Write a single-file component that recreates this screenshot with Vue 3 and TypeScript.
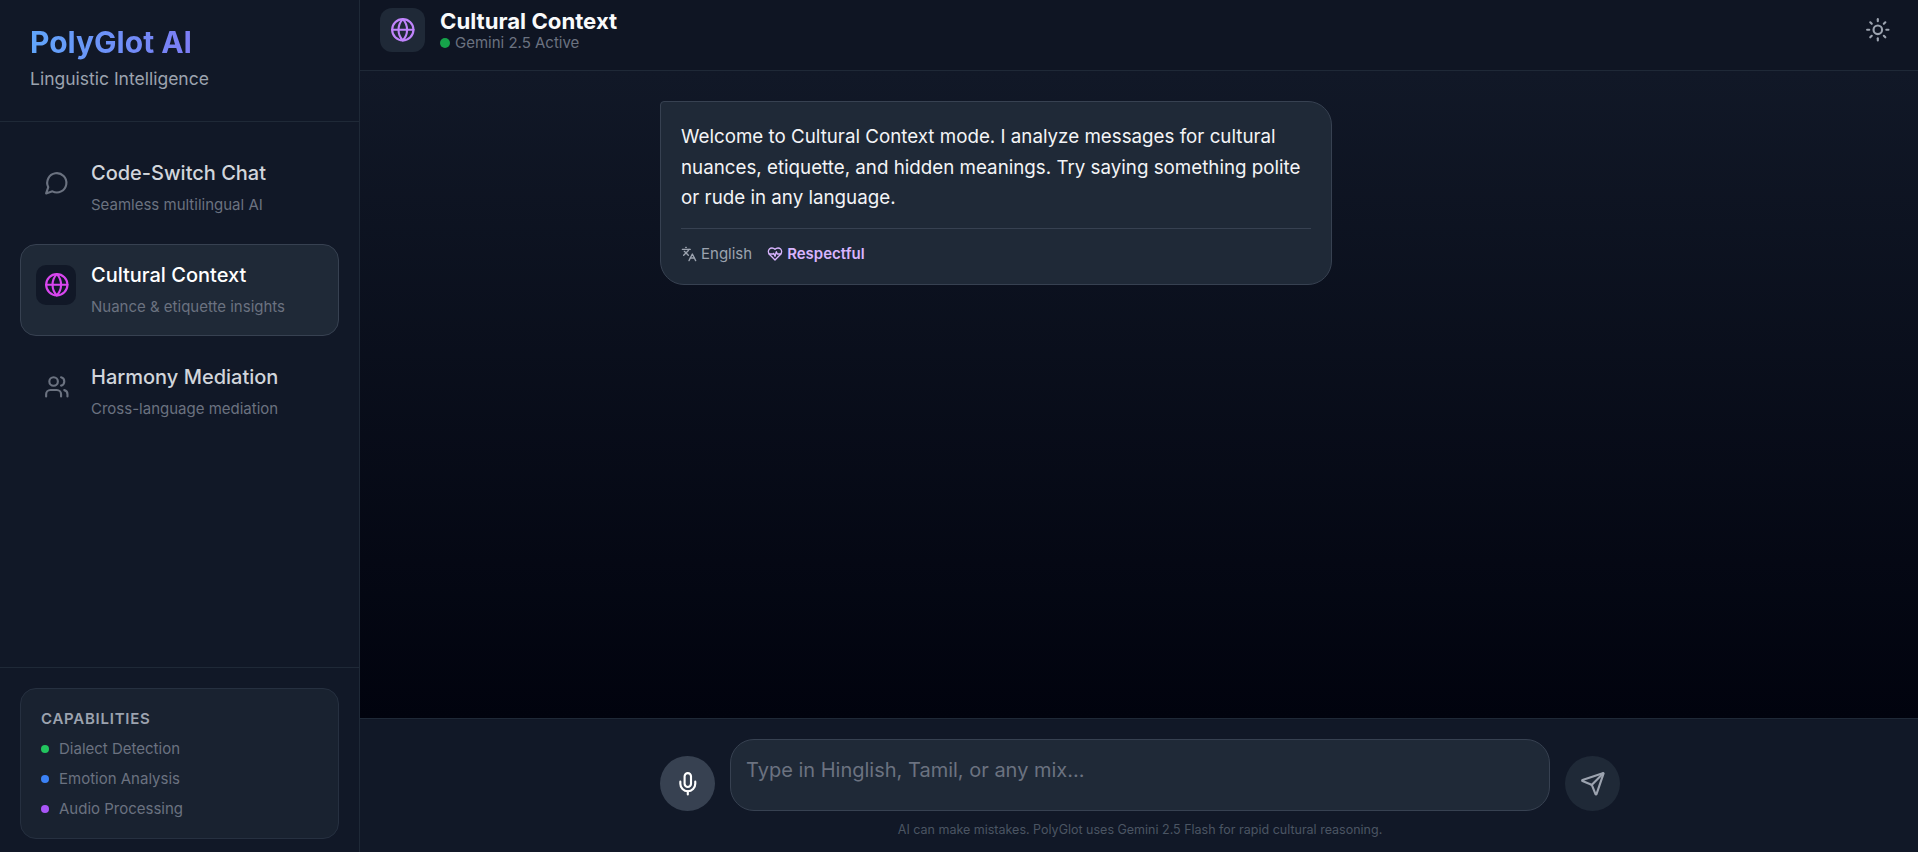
<script setup lang="ts">
import { ref } from 'vue';

// nav entries, active one is highlighted
const modes = [
  { id: 'chat', title: 'Code-Switch Chat', sub: 'Seamless multilingual AI' },
  { id: 'culture', title: 'Cultural Context', sub: 'Nuance & etiquette insights' },
  { id: 'harmony', title: 'Harmony Mediation', sub: 'Cross-language mediation' }
];
const current = ref('culture');
const draft = ref('');

const capabilities = [
  { label: 'Dialect Detection', color: '#22c55e' },
  { label: 'Emotion Analysis', color: '#3b82f6' },
  { label: 'Audio Processing', color: '#a855f7' }
];
</script>

<template>
  <div class="shell">
    <aside class="sidebar">
      <div class="brand">
        <h1>PolyGlot AI</h1>
        <p>Linguistic Intelligence</p>
      </div>

      <nav class="modes">
        <button
          v-for="m in modes"
          :key="m.id"
          class="mode"
          :class="{ active: current === m.id }"
          @click="current = m.id"
        >
          <span class="mode-icon">
            <svg v-if="m.id === 'chat'" viewBox="0 0 24 24"><path d="M7.9 20A9 9 0 1 0 4 16.1L2 22Z" /></svg>
            <svg v-else-if="m.id === 'culture'" viewBox="0 0 24 24">
              <circle cx="12" cy="12" r="10" />
              <path d="M12 2a14.5 14.5 0 0 0 0 20 14.5 14.5 0 0 0 0-20" />
              <path d="M2 12h20" />
            </svg>
            <svg v-else viewBox="0 0 24 24">
              <path d="M16 21v-2a4 4 0 0 0-4-4H6a4 4 0 0 0-4 4v2" />
              <circle cx="9" cy="7" r="4" />
              <path d="M22 21v-2a4 4 0 0 0-3-3.87" />
              <path d="M16 3.13a4 4 0 0 1 0 7.75" />
            </svg>
          </span>
          <span class="mode-text">
            <span class="mode-title">{{ m.title }}</span>
            <span class="mode-sub">{{ m.sub }}</span>
          </span>
        </button>
      </nav>

      <div class="side-foot">
        <div class="caps">
          <h3>Capabilities</h3>
          <ul>
            <li v-for="c in capabilities" :key="c.label">
              <i :style="{ background: c.color }"></i>{{ c.label }}
            </li>
          </ul>
        </div>
      </div>
    </aside>

    <main class="main">
      <header class="topbar">
        <div class="top-left">
          <span class="top-icon">
            <svg viewBox="0 0 24 24">
              <circle cx="12" cy="12" r="10" />
              <path d="M12 2a14.5 14.5 0 0 0 0 20 14.5 14.5 0 0 0 0-20" />
              <path d="M2 12h20" />
            </svg>
          </span>
          <div>
            <h2>Cultural Context</h2>
            <div class="status"><i></i>Gemini 2.5 Active</div>
          </div>
        </div>
        <button class="theme" aria-label="Toggle theme">
          <svg viewBox="0 0 24 24">
            <circle cx="12" cy="12" r="4" />
            <path d="M12 2v2" /><path d="M12 20v2" />
            <path d="m4.93 4.93 1.41 1.41" /><path d="m17.66 17.66 1.41 1.41" />
            <path d="M2 12h2" /><path d="M20 12h2" />
            <path d="m6.34 17.66-1.41 1.41" /><path d="m19.07 4.93-1.41 1.41" />
          </svg>
        </button>
      </header>

      <section class="messages">
        <div class="column">
          <article class="bubble">
            <p>Welcome to Cultural Context mode. I analyze messages for cultural nuances, etiquette, and hidden meanings. Try saying something polite or rude in any language.</p>
            <div class="meta">
              <span class="lang">
                <svg viewBox="0 0 24 24">
                  <path d="m5 8 6 6" /><path d="m4 14 6-6 2-3" /><path d="M2 5h12" /><path d="M7 2h1" />
                  <path d="m22 22-5-10-5 10" /><path d="M14 18h6" />
                </svg>
                English
              </span>
              <span class="tone">
                <svg viewBox="0 0 24 24">
                  <path d="M19 14c1.49-1.46 3-3.21 3-5.5A5.5 5.5 0 0 0 16.5 3c-1.76 0-3 .5-4.5 2-1.5-1.5-2.74-2-4.5-2A5.5 5.5 0 0 0 2 8.5c0 2.3 1.5 4.05 3 5.5l7 7Z" />
                  <path d="M3.22 12H9.5l.5-1 2 4.5 2-7 1.5 3.5h5.27" />
                </svg>
                Respectful
              </span>
            </div>
          </article>
        </div>
      </section>

      <footer class="composer">
        <div class="input-row">
          <button class="round mic" aria-label="Record">
            <svg viewBox="0 0 24 24">
              <path d="M12 2a3 3 0 0 0-3 3v7a3 3 0 0 0 6 0V5a3 3 0 0 0-3-3Z" />
              <path d="M19 10v2a7 7 0 0 1-14 0v-2" />
              <path d="M12 19v3" />
            </svg>
          </button>
          <textarea v-model="draft" placeholder="Type in Hinglish, Tamil, or any mix..."></textarea>
          <button class="round send" aria-label="Send">
            <svg viewBox="0 0 24 24">
              <path d="M14.536 21.686a.5.5 0 0 0 .937-.024l6.5-19a.496.496 0 0 0-.635-.635l-19 6.5a.5.5 0 0 0-.024.937l7.93 3.18a2 2 0 0 1 1.112 1.11z" />
              <path d="m21.854 2.147-10.94 10.939" />
            </svg>
          </button>
        </div>
        <p class="note">AI can make mistakes. PolyGlot uses Gemini 2.5 Flash for rapid cultural reasoning.</p>
      </footer>
    </main>
  </div>
</template>

<style scoped>
/* --- Layout --- */
.shell {
  display: flex;
  height: 852px;
  overflow: hidden;
  background: #111827;
  color: #f3f4f6;
  font-family: Inter, "Noto Sans", sans-serif;
}

svg {
  fill: none;
  stroke: currentColor;
  stroke-width: 2;
  stroke-linecap: round;
  stroke-linejoin: round;
  display: block;
}

/* --- Sidebar --- */
.sidebar {
  width: 360px;
  flex-shrink: 0;
  display: flex;
  flex-direction: column;
  background: #111827;
  border-right: 1px solid #1f2937;
  box-sizing: border-box;
}

.brand {
  height: 122px;
  box-sizing: border-box;
  padding: 24px 30px 0;
  border-bottom: 1px solid #1f2937;
}

.brand h1 {
  margin: 0;
  font-size: 30px;
  line-height: 36px;
  font-weight: 700;
  background: linear-gradient(90deg, #60a5fa, #7c7cf5);
  -webkit-background-clip: text;
  background-clip: text;
  color: transparent;
  display: inline-block;
}

.brand p {
  margin: 8px 0 0;
  font-size: 17.5px;
  line-height: 22px;
  color: #9ca3af;
}

.modes {
  flex: 1;
  display: flex;
  flex-direction: column;
  gap: 10px;
  padding: 20px;
}

.mode {
  display: flex;
  align-items: flex-start;
  gap: 15px;
  height: 92px;
  padding: 16px 15px;
  box-sizing: border-box;
  background: transparent;
  border: 1px solid transparent;
  border-radius: 16px;
  font-family: inherit;
  text-align: left;
  color: #d1d5db;
  cursor: pointer;
}

.mode.active {
  background: #1f2937;
  border-color: #374151;
  color: #fff;
}

.mode-icon {
  width: 40px;
  height: 40px;
  box-sizing: border-box;
  padding-left: 1px;
  margin-top: 4px;
  flex-shrink: 0;
  display: flex;
  align-items: center;
  justify-content: center;
  border-radius: 10px;
  color: #6b7280;
}

.mode-icon svg {
  width: 25.6px;
  height: 25.6px;
}

.mode.active .mode-icon {
  background: #111827;
  color: #d946ef;
}

.mode-text {
  display: flex;
  flex-direction: column;
  gap: 8px;
}

.mode-title {
  font-size: 20px;
  line-height: 28px;
  font-weight: 500;
}

.mode-sub {
  font-size: 15px;
  line-height: 20px;
  color: #6b7280;
}

.side-foot {
  padding: 20px 20px 13px;
  border-top: 1px solid #1f2937;
}

.caps {
  height: 151px;
  box-sizing: border-box;
  padding: 20px;
  background: #192230;
  border: 1px solid #263040;
  border-radius: 16px;
}

.caps h3 {
  margin: 0 0 10px;
  font-size: 15px;
  line-height: 20px;
  font-weight: 600;
  letter-spacing: 0.05em;
  text-transform: uppercase;
  color: #9ca3af;
}

.caps ul {
  list-style: none;
  margin: 0;
  padding: 0;
  display: flex;
  flex-direction: column;
  gap: 10px;
}

.caps li {
  display: flex;
  align-items: center;
  gap: 10px;
  font-size: 15px;
  line-height: 20px;
  color: #6b7280;
}

.caps i {
  width: 8px;
  height: 8px;
  border-radius: 50%;
}

/* --- Main column --- */
.main {
  flex: 1;
  min-width: 0;
  display: flex;
  flex-direction: column;
}

.topbar {
  height: 71px;
  box-sizing: border-box;
  display: flex;
  align-items: flex-start;
  justify-content: space-between;
  padding: 8px 20px 0;
  background: #0f1523;
  border-bottom: 1px solid #1f2937;
}

.top-left {
  display: flex;
  gap: 15px;
}

.top-icon {
  width: 45px;
  height: 44px;
  display: flex;
  align-items: center;
  justify-content: center;
  border-radius: 12px;
  background: #1f2937;
  color: #c084fc;
}

.top-icon svg {
  width: 25.6px;
  height: 25.6px;
}

.topbar h2 {
  margin: 0;
  padding-top: 1px;
  font-size: 22.2px;
  line-height: 24px;
  font-weight: 700;
  color: #f9fafb;
}

.status {
  display: flex;
  align-items: center;
  gap: 5px;
  font-size: 15px;
  line-height: 20px;
  color: #6b7280;
}

.status i {
  width: 10px;
  height: 10px;
  border-radius: 50%;
  background: #16a34a;
}

.theme {
  padding: 0;
  margin: 9px 7px 0 0;
  background: transparent;
  border: none;
  color: #9ca3af;
  cursor: pointer;
}

.theme svg {
  width: 25.6px;
  height: 25.6px;
}

/* --- Messages --- */
.messages {
  flex: 1;
  min-height: 0;
  padding: 30px 0 30px 2px;
  background: linear-gradient(#111827, #01030e);
}

.column {
  width: 960px;
  margin: 0 auto;
}

.bubble {
  width: 672px;
  box-sizing: border-box;
  padding: 20px;
  background: #1f2937;
  border: 1px solid #374151;
  border-radius: 4px 24px 24px 24px;
}

.bubble p {
  margin: 0;
  font-size: 18.75px;
  line-height: 30.6px;
  color: #f3f4f6;
}

.meta {
  display: flex;
  align-items: center;
  gap: 15px;
  margin-top: 14px;
  padding-top: 15px;
  border-top: 1px solid #374151;
  font-size: 15px;
  line-height: 20px;
}

.meta span {
  display: flex;
  align-items: center;
  gap: 4px;
}

.meta svg {
  width: 16px;
  height: 16px;
}

.lang {
  color: #9ca3af;
}

.tone {
  color: #d8b4fe;
  font-weight: 600;
}

/* --- Composer --- */
.composer {
  height: 134px;
  box-sizing: border-box;
  padding: 20px 0 0 2px;
  background: #111827;
  border-top: 1px solid #1f2937;
}

.input-row {
  width: 960px;
  margin: 0 auto;
  display: flex;
  align-items: flex-end;
  gap: 15px;
}

.round {
  width: 55px;
  height: 55px;
  flex-shrink: 0;
  display: flex;
  align-items: center;
  justify-content: center;
  padding: 0;
  border: none;
  border-radius: 50%;
  cursor: pointer;
}

.round svg {
  width: 25.6px;
  height: 25.6px;
}

.mic {
  background: #374151;
  color: #fff;
}

.send {
  background: #1f2937;
  color: #9ca3af;
}

textarea {
  flex: 1;
  height: 72px;
  box-sizing: border-box;
  padding: 16px 15px;
  resize: none;
  outline: none;
  background: #1f2937;
  border: 1px solid #374151;
  border-radius: 24px;
  font-family: inherit;
  font-size: 20px;
  line-height: 28px;
  color: #f3f4f6;
}

textarea::placeholder {
  color: #6b7280;
}

.note {
  margin: 10px 0 0;
  text-align: center;
  font-size: 12.5px;
  line-height: 18px;
  color: #4b5563;
}
</style>

<style>
html,
body {
  background: #111827;
  overflow: hidden;
}
</style>
